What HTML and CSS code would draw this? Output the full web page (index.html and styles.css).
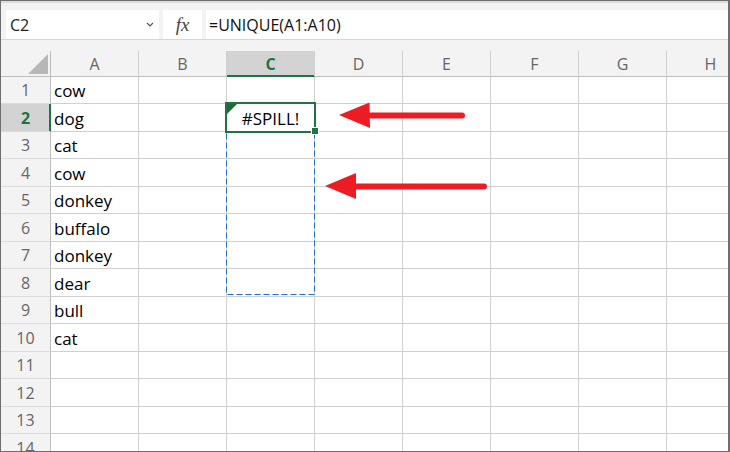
FILE: index.html
```html
<!DOCTYPE html>
<html lang="en">
<head>
    <meta charset="UTF-8">
    <meta name="viewport" content="width=device-width, initial-scale=1.0">
    <title>UNIQUE - #SPILL!</title>
    <link rel="stylesheet" href="styles.css">
</head>
<body>
    <div class="window">
        <!-- formula bar -->
        <div class="formula-bar">
            <div class="name-box">
                <span>C2</span>
                <svg class="chevron" width="8" height="5" viewBox="0 0 8 5"><path d="M1 1 L4 4 L7 1" fill="none" stroke="#555" stroke-width="1.2"/></svg>
            </div>
            <div class="fx-box">fx</div>
            <div class="formula-input">=UNIQUE(A1:A10)</div>
        </div>

        <!-- grid -->
        <div class="sheet">
            <div class="row head-row">
                <div class="corner"><svg width="20" height="20" viewBox="0 0 20 20"><polygon points="0,20 20,20 20,0" fill="#b7b7b7"/></svg></div>
                <div class="col-head">A</div><div class="col-head">B</div><div class="col-head active">C</div><div class="col-head">D</div>
                <div class="col-head">E</div><div class="col-head">F</div><div class="col-head">G</div><div class="col-head">H</div>
            </div>
            <div class="row"><div class="row-head">1</div><div class="cell">cow</div><div class="cell"></div><div class="cell"></div><div class="cell"></div><div class="cell"></div><div class="cell"></div><div class="cell"></div><div class="cell"></div></div>
            <div class="row"><div class="row-head active">2</div><div class="cell">dog</div><div class="cell"></div><div class="cell center">#SPILL!</div><div class="cell"></div><div class="cell"></div><div class="cell"></div><div class="cell"></div><div class="cell"></div></div>
            <div class="row"><div class="row-head">3</div><div class="cell">cat</div><div class="cell"></div><div class="cell"></div><div class="cell"></div><div class="cell"></div><div class="cell"></div><div class="cell"></div><div class="cell"></div></div>
            <div class="row"><div class="row-head">4</div><div class="cell">cow</div><div class="cell"></div><div class="cell"></div><div class="cell"></div><div class="cell"></div><div class="cell"></div><div class="cell"></div><div class="cell"></div></div>
            <div class="row"><div class="row-head">5</div><div class="cell">donkey</div><div class="cell"></div><div class="cell"></div><div class="cell"></div><div class="cell"></div><div class="cell"></div><div class="cell"></div><div class="cell"></div></div>
            <div class="row"><div class="row-head">6</div><div class="cell">buffalo</div><div class="cell"></div><div class="cell"></div><div class="cell"></div><div class="cell"></div><div class="cell"></div><div class="cell"></div><div class="cell"></div></div>
            <div class="row"><div class="row-head">7</div><div class="cell">donkey</div><div class="cell"></div><div class="cell"></div><div class="cell"></div><div class="cell"></div><div class="cell"></div><div class="cell"></div><div class="cell"></div></div>
            <div class="row"><div class="row-head">8</div><div class="cell">dear</div><div class="cell"></div><div class="cell"></div><div class="cell"></div><div class="cell"></div><div class="cell"></div><div class="cell"></div><div class="cell"></div></div>
            <div class="row"><div class="row-head">9</div><div class="cell">bull</div><div class="cell"></div><div class="cell"></div><div class="cell"></div><div class="cell"></div><div class="cell"></div><div class="cell"></div><div class="cell"></div></div>
            <div class="row"><div class="row-head">10</div><div class="cell">cat</div><div class="cell"></div><div class="cell"></div><div class="cell"></div><div class="cell"></div><div class="cell"></div><div class="cell"></div><div class="cell"></div></div>
            <div class="row"><div class="row-head">11</div><div class="cell"></div><div class="cell"></div><div class="cell"></div><div class="cell"></div><div class="cell"></div><div class="cell"></div><div class="cell"></div><div class="cell"></div></div>
            <div class="row"><div class="row-head">12</div><div class="cell"></div><div class="cell"></div><div class="cell"></div><div class="cell"></div><div class="cell"></div><div class="cell"></div><div class="cell"></div><div class="cell"></div></div>
            <div class="row"><div class="row-head">13</div><div class="cell"></div><div class="cell"></div><div class="cell"></div><div class="cell"></div><div class="cell"></div><div class="cell"></div><div class="cell"></div><div class="cell"></div></div>
            <div class="row"><div class="row-head">14</div><div class="cell"></div><div class="cell"></div><div class="cell"></div><div class="cell"></div><div class="cell"></div><div class="cell"></div><div class="cell"></div><div class="cell"></div></div>
        </div>

        <!-- selection, spill range and callout arrows drawn over the grid -->
        <svg class="overlay" width="727" height="450" viewBox="1 1 727 450">
            <rect x="226.5" y="103.5" width="88" height="191" fill="none" stroke="#1f6fd0" stroke-width="1" stroke-dasharray="6 3"/>
            <rect x="226" y="103" width="89" height="29" fill="none" stroke="#217346" stroke-width="2"/>
            <rect x="311" y="127" width="8" height="8" fill="#fff"/>
            <rect x="312" y="128" width="6" height="6" fill="#217346"/>
            <polygon points="227,104 237,104 227,114" fill="#1e6b33"/>

            <line x1="366" y1="115.5" x2="462" y2="115.5" stroke="#ed1c24" stroke-width="6" stroke-linecap="round"/>
            <polygon points="339,115 369.5,102.5 370,128" fill="#ed1c24"/>

            <line x1="352" y1="186.5" x2="484" y2="186.5" stroke="#ed1c24" stroke-width="6" stroke-linecap="round"/>
            <polygon points="325,186 356,173 356,199" fill="#ed1c24"/>
        </svg>
    </div>
</body>
</html>
```

FILE: styles.css
```css
body {
    margin: 0;
    background: #fff;
}
.window {
    position: relative;
    width: 730px;
    height: 452px;
    box-sizing: border-box;
    border: 1px solid #6f6f6f;
    border-right-width: 2px;
    overflow: hidden;
    background: #f3f3f3;
    font-family: "Open Sans", "Noto Sans", sans-serif;
}

/* formula bar */
.formula-bar {
    display: flex;
    gap: 4px;
    height: 39px;
    box-sizing: border-box;
    padding: 9px 0 0 5px;
    border-bottom: 1px solid #d6d6d6;
    background: linear-gradient(#dddddd 0 2px, #f3f3f3 2px);
}
.name-box,
.fx-box,
.formula-input {
    height: 29px;
    background: #fff;
    display: flex;
    align-items: center;
    box-sizing: border-box;
}
.name-box {
    width: 153px;
    padding: 0 5px 0 4px;
    justify-content: space-between;
    font-size: 16px;
    color: #222;
}
.fx-box {
    width: 39px;
    justify-content: center;
    font-family: "Liberation Serif", serif;
    font-style: italic;
    font-size: 19px;
    color: #444;
}
.formula-input {
    flex: 1;
    padding-left: 3px;
    font-size: 16px;
    color: #111;
}

/* sheet grid */
.sheet {
    padding-top: 11px;
}
.row {
    display: grid;
    grid-template-columns: 50px repeat(8, 88px);
    height: 27px;
}
.row:nth-child(odd) {
    height: 28px;
}
.row > div {
    box-sizing: border-box;
    border-right: 1px solid #d0d0d0;
    border-bottom: 1px solid #d0d0d0;
}
.row.head-row {
    height: 26px;
}
.head-row > div {
    border-bottom-color: #bdbdbd;
}
.corner {
    display: flex;
    justify-content: flex-end;
    align-items: flex-end;
    padding: 0 2px 2px 0;
}
.corner,
.row-head {
    border-right-color: #bdbdbd !important;
}
.col-head,
.row-head {
    display: flex;
    align-items: center;
    justify-content: center;
    font-size: 16px;
    color: #666;
}
.row-head {
    border-bottom-color: #dcdcdc !important;
}
.col-head.active {
    background: #d3d3d3;
    color: #217346;
    font-weight: bold;
    border-bottom-color: #217346 !important;
    box-shadow: inset 0 -1px 0 #217346;
}
.row-head.active {
    background: #d3d3d3;
    color: #217346;
    font-weight: bold;
    border-right-color: #217346 !important;
    box-shadow: inset -1px 0 0 #217346;
}
.cell {
    background: #fff;
    display: flex;
    align-items: flex-end;
    padding: 0 0 1px 3px;
    font-size: 17px;
    color: #000;
    white-space: nowrap;
}
.cell.center {
    justify-content: center;
    padding-left: 0;
}

.overlay {
    position: absolute;
    top: 0;
    left: 0;
    pointer-events: none;
}
```
